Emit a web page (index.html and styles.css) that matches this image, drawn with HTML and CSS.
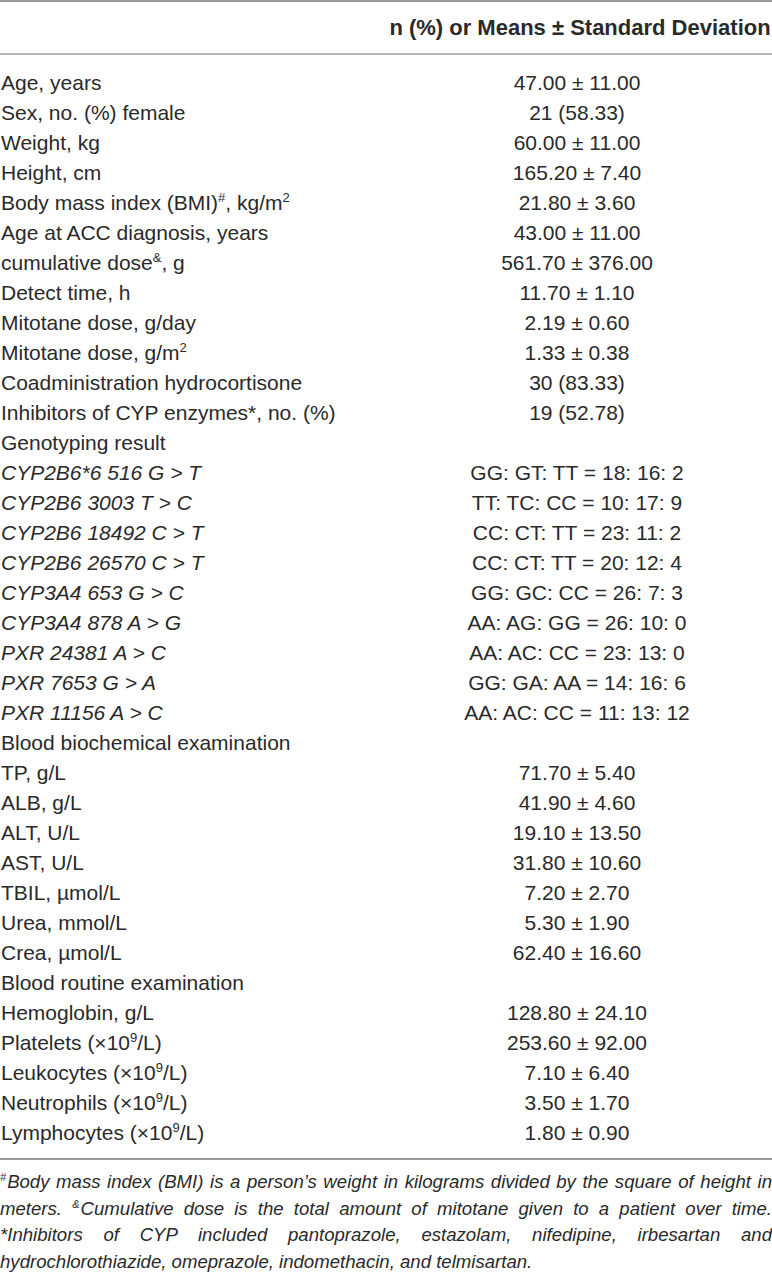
FILE: index.html
```html
<!DOCTYPE html>
<html lang="en">
<head>
<meta charset="utf-8">
<title>Table</title>
<link rel="stylesheet" href="styles.css">
</head>
<body>
<div class="page">
  <table class="stats">
    <thead>
      <tr><th class="lab"></th><th class="val">n (%) or Means ± Standard Deviation</th></tr>
    </thead>
    <tbody>
      <tr class="first"><td class="lab">Age, years</td><td class="val">47.00 ± 11.00</td></tr>
      <tr><td class="lab">Sex, no. (%) female</td><td class="val">21 (58.33)</td></tr>
      <tr><td class="lab">Weight, kg</td><td class="val">60.00 ± 11.00</td></tr>
      <tr><td class="lab">Height, cm</td><td class="val">165.20 ± 7.40</td></tr>
      <tr><td class="lab">Body mass index (BMI)<sup>#</sup>, kg/m<sup>2</sup></td><td class="val">21.80 ± 3.60</td></tr>
      <tr><td class="lab">Age at ACC diagnosis, years</td><td class="val">43.00 ± 11.00</td></tr>
      <tr><td class="lab">cumulative dose<sup>&amp;</sup>, g</td><td class="val">561.70 ± 376.00</td></tr>
      <tr><td class="lab">Detect time, h</td><td class="val">11.70 ± 1.10</td></tr>
      <tr><td class="lab">Mitotane dose, g/day</td><td class="val">2.19 ± 0.60</td></tr>
      <tr><td class="lab">Mitotane dose, g/m<sup>2</sup></td><td class="val">1.33 ± 0.38</td></tr>
      <tr><td class="lab">Coadministration hydrocortisone</td><td class="val">30 (83.33)</td></tr>
      <tr><td class="lab">Inhibitors of CYP enzymes*, no. (%)</td><td class="val">19 (52.78)</td></tr>
      <tr><td class="lab">Genotyping result</td><td class="val"></td></tr>
      <tr><td class="lab it">CYP2B6*6 516 G &gt; T</td><td class="val">GG: GT: TT = 18: 16: 2</td></tr>
      <tr><td class="lab it">CYP2B6 3003 T &gt; C</td><td class="val">TT: TC: CC = 10: 17: 9</td></tr>
      <tr><td class="lab it">CYP2B6 18492 C &gt; T</td><td class="val">CC: CT: TT = 23: 11: 2</td></tr>
      <tr><td class="lab it">CYP2B6 26570 C &gt; T</td><td class="val">CC: CT: TT = 20: 12: 4</td></tr>
      <tr><td class="lab it">CYP3A4 653 G &gt; C</td><td class="val">GG: GC: CC = 26: 7: 3</td></tr>
      <tr><td class="lab it">CYP3A4 878 A &gt; G</td><td class="val">AA: AG: GG = 26: 10: 0</td></tr>
      <tr><td class="lab it">PXR 24381 A &gt; C</td><td class="val">AA: AC: CC = 23: 13: 0</td></tr>
      <tr><td class="lab it">PXR 7653 G &gt; A</td><td class="val">GG: GA: AA = 14: 16: 6</td></tr>
      <tr><td class="lab it">PXR 11156 A &gt; C</td><td class="val">AA: AC: CC = 11: 13: 12</td></tr>
      <tr><td class="lab">Blood biochemical examination</td><td class="val"></td></tr>
      <tr><td class="lab">TP, g/L</td><td class="val">71.70 ± 5.40</td></tr>
      <tr><td class="lab">ALB, g/L</td><td class="val">41.90 ± 4.60</td></tr>
      <tr><td class="lab">ALT, U/L</td><td class="val">19.10 ± 13.50</td></tr>
      <tr><td class="lab">AST, U/L</td><td class="val">31.80 ± 10.60</td></tr>
      <tr><td class="lab">TBIL, µmol/L</td><td class="val">7.20 ± 2.70</td></tr>
      <tr><td class="lab">Urea, mmol/L</td><td class="val">5.30 ± 1.90</td></tr>
      <tr><td class="lab">Crea, µmol/L</td><td class="val">62.40 ± 16.60</td></tr>
      <tr><td class="lab">Blood routine examination</td><td class="val"></td></tr>
      <tr><td class="lab">Hemoglobin, g/L</td><td class="val">128.80 ± 24.10</td></tr>
      <tr><td class="lab">Platelets (×10<sup>9</sup>/L)</td><td class="val">253.60 ± 92.00</td></tr>
      <tr><td class="lab">Leukocytes (×10<sup>9</sup>/L)</td><td class="val">7.10 ± 6.40</td></tr>
      <tr><td class="lab">Neutrophils (×10<sup>9</sup>/L)</td><td class="val">3.50 ± 1.70</td></tr>
      <tr class="last"><td class="lab">Lymphocytes (×10<sup>9</sup>/L)</td><td class="val">1.80 ± 0.90</td></tr>
    </tbody>
  </table>
  <p class="notes"><sup>#</sup><span>Body mass index (BMI) is a person’s weight in kilograms divided by the square of height in</span> <span>meters.</span> <sup>&amp;</sup><span>Cumulative dose is the total amount of mitotane given to a patient over time.</span> <span>*Inhibitors of CYP included pantoprazole, estazolam, nifedipine, irbesartan and</span> <span>hydrochlorothiazide, omeprazole, indomethacin, and telmisartan.</span></p>
</div>
</body>
</html>
```

FILE: styles.css
```css
html, body {
  margin: 0;
  padding: 0;
  background: #ffffff;
}

.page {
  width: 772px;
  color: #2a2a2a;
  font-family: "Liberation Sans", Arial, sans-serif;
}

.stats {
  width: 772px;
  border-collapse: collapse;
  border-top: 2px solid #9a9a9a;
  border-bottom: 2px solid #9a9a9a;
  table-layout: fixed;
}

.stats th,
.stats td {
  padding: 0;
  font-size: 21px;
  line-height: 30px;
  white-space: nowrap;
}

.stats .lab {
  width: 386px;
  text-align: left;
  padding-left: 1px;
}

.stats .val {
  width: 386px;
  text-align: center;
}

.stats td.val {
  padding-right: 6px;
}

.stats thead th {
  height: 51px;
  font-weight: bold;
  font-size: 22px;
  border-bottom: 2px solid #b5b5b5;
  vertical-align: middle;
}

.stats tr.first td {
  padding-top: 13px;
}

.stats tr.last td {
  padding-bottom: 10px;
}

.stats .it {
  font-style: italic;
}

.stats sup {
  font-size: 13px;
  line-height: 0;
  vertical-align: 8px;
}

.notes {
  margin: 9px 0 0;
  font-size: 18.6px;
  line-height: 26.5px;
  font-style: italic;
  text-align: justify;
  font-family: "Liberation Sans", Arial, sans-serif;
}

.notes sup {
  font-size: 11px;
  line-height: 0;
  vertical-align: 7px;
  margin-right: 1px;
}
```
